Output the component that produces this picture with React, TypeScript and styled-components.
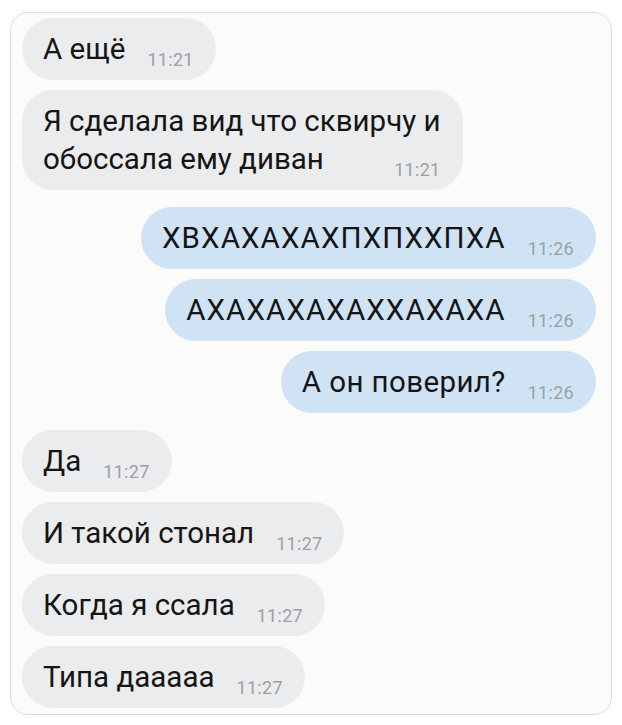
import React from "react";
import styled, { createGlobalStyle } from "styled-components";

const GlobalStyle = createGlobalStyle`
  html, body {
    margin: 0;
    padding: 0;
    background: #ffffff;
  }
  body {
    font-family: "Roboto", "Liberation Sans", Arial, sans-serif;
    -webkit-font-smoothing: antialiased;
  }
`;

const Card = styled.div`
  box-sizing: border-box;
  margin: 12px 10px 10px 10px;
  height: 703px;
  border: 1px solid #dcdcdc;
  border-radius: 18px;
  background: #fbfbfa;
  padding: 5px 15px 0 11px;
  display: flex;
  flex-direction: column;
  gap: 17px;
`;

const Group = styled.div<{ $out?: boolean }>`
  display: flex;
  flex-direction: column;
  gap: 10px;
  align-items: ${(p) => (p.$out ? "flex-end" : "flex-start")};
`;

const Bubble = styled.div<{ $out?: boolean; $spacing?: number }>`
  box-sizing: border-box;
  display: flex;
  flex-direction: column;
  padding: 12px 22px 12px 21px;
  border-radius: 31px;
  background: ${(p) => (p.$out ? "#d0e3f5" : "#ebecee")};
  color: #151515;
  font-size: 29.5px;
  line-height: 38px;
  letter-spacing: ${(p) => p.$spacing ?? 0}px;
`;

const Line = styled.div`
  display: flex;
  align-items: flex-end;
  justify-content: space-between;
  gap: 22px;
  white-space: nowrap;
`;

const Time = styled.span`
  font-size: 18px;
  line-height: 18px;
  letter-spacing: 0.3px;
  color: #9c9fa4;
  flex-shrink: 0;
  margin-bottom: -1px;
`;

type Msg = { lines: string[]; time: string; spacing?: number };

function Message({ msg, out }: { msg: Msg; out?: boolean }) {
  const last = msg.lines.length - 1;
  return (
    <Bubble $out={out} $spacing={msg.spacing}>
      {msg.lines.map((line, i) =>
        i < last ? (
          <Line key={i}>{line}</Line>
        ) : (
          <Line key={i}>
            <span>{line}</span>
            <Time>{msg.time}</Time>
          </Line>
        )
      )}
    </Bubble>
  );
}

const groups: { out?: boolean; messages: Msg[] }[] = [
  {
    messages: [
      { lines: ["А ещё"], time: "11:21" },
      {
        lines: ["Я сделала вид что сквирчу и", "обоссала ему диван"],
        time: "11:21",
      },
    ],
  },
  {
    out: true,
    messages: [
      { lines: ["ХВХАХАХАХПХПХХПХА"], time: "11:26", spacing: 1.1 },
      { lines: ["АХАХАХАХАХХАХАХА"], time: "11:26", spacing: 1.1 },
      { lines: ["А он поверил?"], time: "11:26", spacing: 0.4 },
    ],
  },
  {
    messages: [
      { lines: ["Да"], time: "11:27" },
      { lines: ["И такой стонал"], time: "11:27" },
      { lines: ["Когда я ссала"], time: "11:27" },
      { lines: ["Типа дааааа"], time: "11:27" },
    ],
  },
];

function App() {
  return (
    <>
      <GlobalStyle />
      <Card>
        {groups.map((g, gi) => (
          <Group key={gi} $out={g.out}>
            {g.messages.map((m, mi) => (
              <Message key={mi} msg={m} out={g.out} />
            ))}
          </Group>
        ))}
      </Card>
    </>
  );
}

export default App;
